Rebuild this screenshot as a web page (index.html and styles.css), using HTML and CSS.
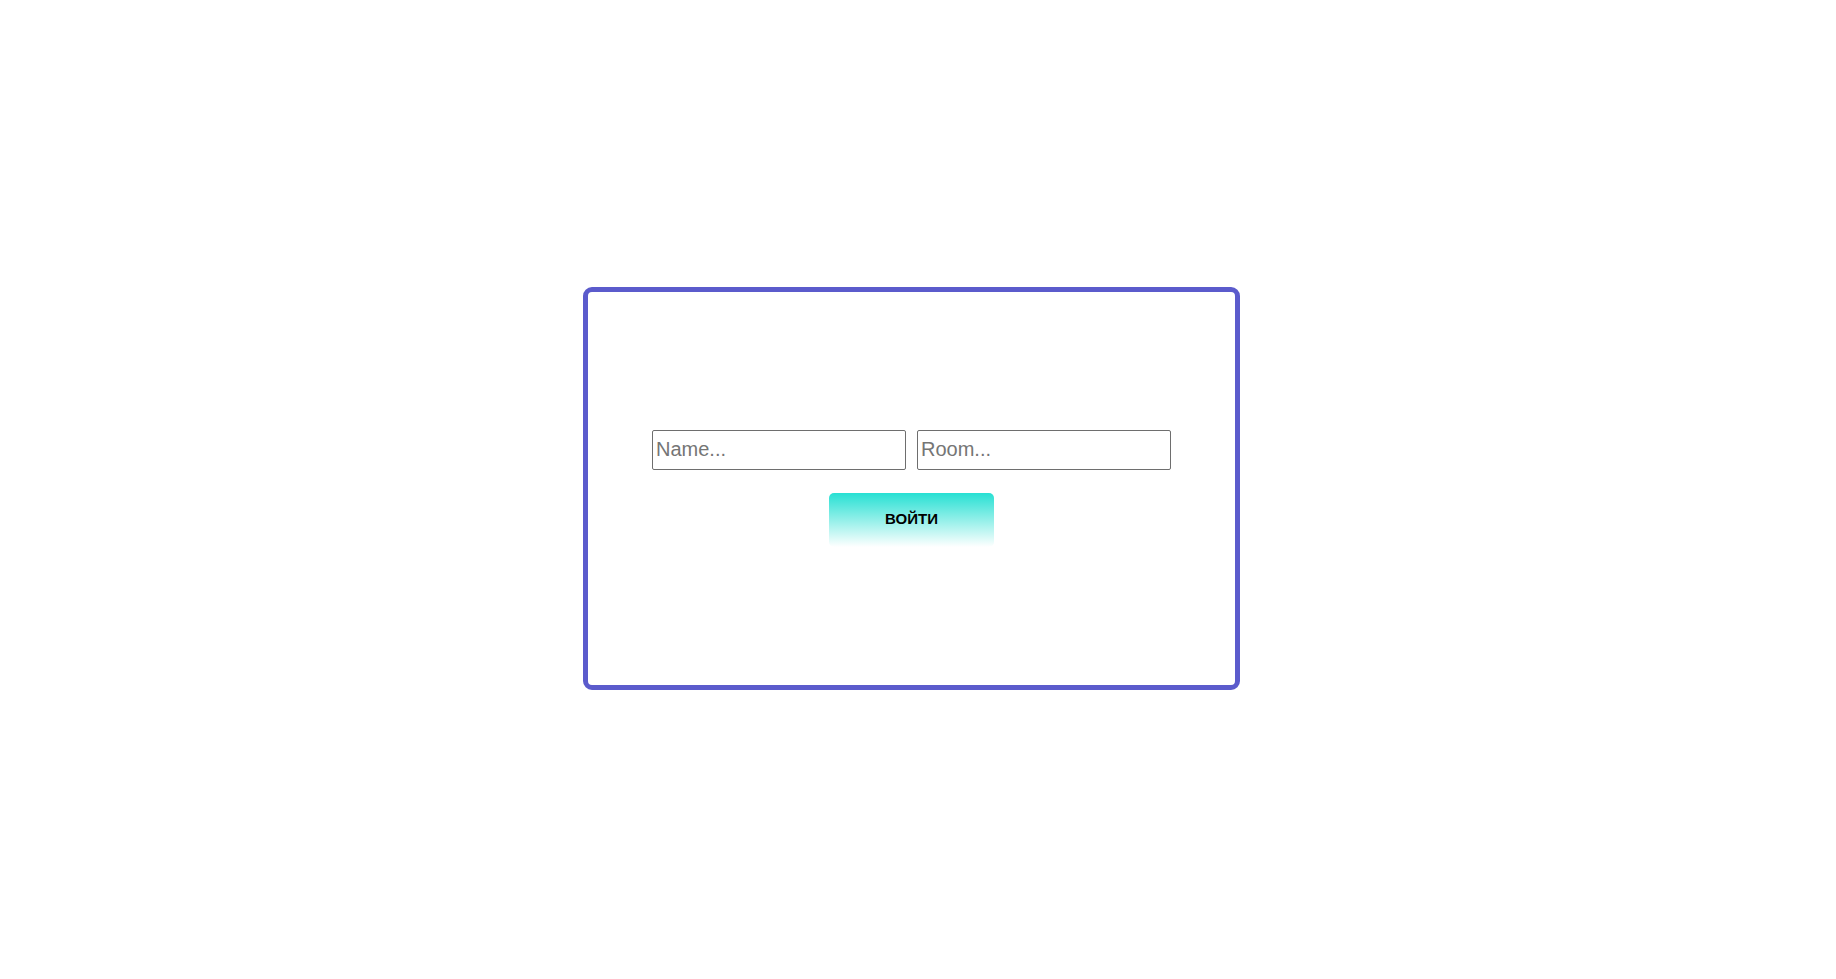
FILE: index.html
```html
<!DOCTYPE html>
<html>
<head>
<meta charset="utf-8">
<link rel="stylesheet" href="styles.css">
</head>
<body>
<div class="page">
  <div class="card">
    <div class="row">
      <input class="field" type="text" placeholder="Name...">
      <input class="field" type="text" placeholder="Room...">
    </div>
    <button class="btn">ВОЙТИ</button>
  </div>
</div>
</body>
</html>
```
FILE: styles.css
```css
html, body {
  margin: 0;
  padding: 0;
  background: #fff;
  font-family: "Liberation Sans", Arial, sans-serif;
}
.page {
  height: 979px;
  display: flex;
  align-items: center;
  justify-content: center;
  padding-right: 13px;
  padding-bottom: 2px;
  box-sizing: border-box;
}
.card {
  width: 657px;
  height: 403px;
  box-sizing: border-box;
  border: 5px solid #5b5bcc;
  border-radius: 9px;
  padding-bottom: 1px;
  display: flex;
  flex-direction: column;
  align-items: center;
  justify-content: center;
  gap: 23px;
}
.row {
  display: flex;
  gap: 11px;
}
.field {
  width: 254px;
  height: 40px;
  box-sizing: border-box;
  border: 1px solid #6e6e6e;
  border-radius: 2px;
  padding: 1px 3px;
  font-family: "Liberation Sans", Arial, sans-serif;
  font-size: 20px;
  color: #000;
  outline: none;
}
.field::placeholder {
  color: #757575;
}
.btn {
  width: 165px;
  height: 54px;
  border: none;
  border-radius: 5px;
  background: linear-gradient(to bottom, #27e0d3 0%, #ffffff 100%);
  font-family: "Liberation Sans", Arial, sans-serif;
  font-weight: bold;
  font-size: 15px;
  color: #000;
  padding: 0 0 2px 0;
}
```
